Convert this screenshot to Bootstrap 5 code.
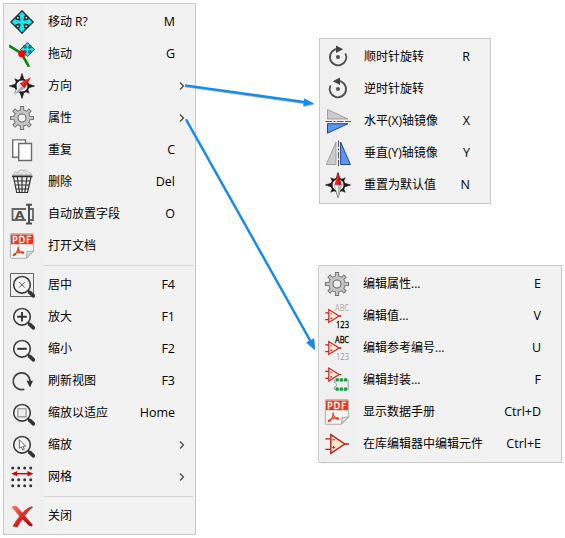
<!DOCTYPE html>
<html lang="zh-CN">
<head>
<meta charset="utf-8">
<meta name="viewport" content="width=device-width, initial-scale=1">
<title>元件菜单</title>
<link href="https://cdn.jsdelivr.net/npm/bootstrap@5.3.0/dist/css/bootstrap.min.css" rel="stylesheet">
<style>
body{width:565px;height:538px;overflow:hidden;background:#fff;color:#000;font:12px/16px "Open Sans","Noto Sans CJK SC",sans-serif}
.stage{padding:3px 0 0 3px}
.popup{border:1px solid #c8c8c8;padding:2px 0;background:linear-gradient(90deg,#f0f0f0 40px,#f2f2f2 40px)}
.popup-main{width:193px}
.popup-orient{width:172px;margin:35px 0 0 123px}
.popup-props{width:244px;margin:61px 0 0 122px}
.entry{height:32px;padding:0 20px 0 5px;white-space:nowrap}
.entry svg{width:26px;height:26px;margin-right:13px;flex:none}
.keys{font-size:12.5px}
.entry .more{width:6px;height:10px;margin-right:-10px}
.rule{height:1px;margin:3px 2px 3px 40px;background:#d2d2d2}
.arrows{left:0;top:0;pointer-events:none}
</style>
<script src="https://cdn.jsdelivr.net/npm/bootstrap@5.3.0/dist/js/bootstrap.bundle.min.js"></script>
</head>
<body class="position-relative">
<svg class="position-absolute" width="0" height="0">
<defs>
<linearGradient id="redfade" x1="0" y1="0" x2="1" y2="1"><stop offset="0" stop-color="#f98074"/><stop offset=".5" stop-color="#d42a22"/><stop offset="1" stop-color="#9a0808"/></linearGradient>
</defs>
</svg>
<svg class="d-none">
<symbol id="move" viewBox="0 0 26 26">
<path d="M13 1.8 18 7 16 7.2 15.2 10.8 18.8 10 19 8 24.2 13 19 18 18.8 16 15.2 15.2 16 18.8 18 19 13 24.2 8 19 10 18.8 10.8 15.2 7.2 16 7 18 1.8 13 7 8 7.2 10 10.8 10.8 10 7.2 8 7Z" fill="#1fe3e6" stroke="#1c3438" stroke-width="1.3" stroke-linejoin="round"/>
<path d="M8 7 7 8M18 7 19 8M7 18 8 19M19 18 18 19" stroke="#1c3438" stroke-width="1.6"/>
<g fill="#a8dfe2" stroke="#1c3438" stroke-width="1.4"><circle cx="8.8" cy="8.8" r="1.7"/><circle cx="17.2" cy="8.8" r="1.7"/><circle cx="8.8" cy="17.2" r="1.7"/><circle cx="17.2" cy="17.2" r="1.7"/></g>
</symbol>
<symbol id="drag" viewBox="0 0 26 26">
<path d="M0 4.7 12.5 12.5 20 25.8" fill="none" stroke="#0a860a" stroke-width="2.6"/>
<use href="#move" x="10.2" y=".2" width="16.5" height="16.5"/>
<circle cx="12.7" cy="12.7" r="3.5" fill="#f00"/>
</symbol>
<symbol id="rose" viewBox="0 0 26 26">
<circle cx="13" cy="13" r="6.5" fill="#f4f4f4" stroke="#1c1c1c" stroke-width="1.7"/>
<path d="M13 .5 15 7H11ZM13 25.5 11 19h4ZM.5 13 7 11v4ZM25.5 13 19 15V11ZM5.8 5.8 9.6 7.6 7.6 9.6ZM20.2 5.8 18.4 9.6 16.4 7.6ZM5.8 20.2 7.6 16.4 9.6 18.4ZM20.2 20.2 16.4 18.4 18.4 16.4Z" fill="#1c1c1c" stroke="#1c1c1c" stroke-width=".7"/>
</symbol>
<symbol id="orient" viewBox="0 0 26 26">
<use href="#rose" width="26" height="26"/>
<path d="M21.8 4.2 10.3 10.5 15.3 15.5Z" fill="#f02c26"/><path d="M21.8 4.2 13 13 15.3 15.5Z" fill="#cf1a18"/>
<path d="M4.8 22.2 10.3 10.5 15.3 15.5Z" fill="#e6e6e6"/><path d="M4.8 22.2 13 13 15.3 15.5Z" fill="#aaa"/>
</symbol>
<symbol id="reset" viewBox="0 0 26 26">
<use href="#rose" width="26" height="26"/>
<path d="M13 .6 9.4 13h7.2Z" fill="#ee2420"/><path d="M13 .6V13h3.6Z" fill="#c81414"/>
<path d="M13 25.4 9.4 13h7.2Z" fill="#eee" stroke="#999" stroke-width=".5"/><path d="M13 25.4V13h3.6Z" fill="#b5b5b5"/>
</symbol>
<symbol id="gear" viewBox="0 0 26 26">
<path d="M13 1V25M1 13H25M4.7 4.7 21.3 21.3M21.3 4.7 4.7 21.3" stroke="#6f6f6f" stroke-width="4.2"/>
<circle cx="13" cy="13" r="8.2" fill="#c4c4c4" stroke="#6f6f6f" stroke-width="1"/>
<path d="M13 2V24M2 13H24M5.4 5.4 20.6 20.6M20.6 5.4 5.4 20.6" stroke="#c4c4c4" stroke-width="2.5"/>
<circle cx="13" cy="13" r="4" fill="#f0f0f0" stroke="#6f6f6f" stroke-width="1.1"/>
</symbol>
<symbol id="copy" viewBox="0 0 26 26"><g fill="#fff" stroke="#6c6c6c" stroke-width="1.4"><path d="M3.7 2.9H16.5V20.3H3.7Z"/><path d="M9.7 6.5H22.5V23.5H9.7Z"/></g></symbol>
<symbol id="trash" viewBox="0 0 26 26">
<path d="M4 5.7 6 3 9 3.4 11 1 15 1.4 16.5.8 18.5 3 21 3.4 22.5 5.7Z" fill="#eee" stroke="#aaa" stroke-width=".8"/><path d="M7 5 10 3.4 12 5 15 2.5 18 5" fill="none" stroke="#bbb" stroke-width=".7"/>
<path d="M3 7.4H23.5" stroke="#333" stroke-width="1.8"/>
<path d="M4.5 8 7.7 23.5H18.5L22 8M8.3 8 10.5 23.5M13 8V23.5M18 8 15.8 23.5M5.3 12H21M6 16H20M7 20H19.3" fill="none" stroke="#333" stroke-width="1.2"/>
</symbol>
<symbol id="field" viewBox="0 0 26 26">
<path d="M17 8H3.5V19H17M21 8H24V19H21" fill="none" stroke="#666" stroke-width="1.8"/>
<path d="M17 3.8H23M17 22.4H23M20 3.5V22.5" stroke="#4e4e4e" stroke-width="2"/>
<text x="6" y="17.5" textLength="9.5" lengthAdjust="spacingAndGlyphs" font-family="DejaVu Sans,sans-serif" font-weight="700" font-size="11" fill="#4a4a4a">A</text>
</symbol>
<symbol id="pdf" viewBox="0 0 26 26">
<path d="M2.3.7H23.7Q24.6.7 24.6 1.6V18L17.5 25.3H2.3Q1.4 25.3 1.4 24.4V1.6Q1.4.7 2.3.7Z" fill="#f4f4f4" stroke="#a8a8a8" stroke-width=".9"/>
<path d="M17.5 25 18 18.5 24.5 18Z" fill="#ddd" stroke="#999" stroke-width=".8"/>
<path d="M2 1.5H24V11.2H2Z" fill="#e8391e"/>
<text x="3.3" y="9.7" textLength="19" lengthAdjust="spacing" font-family="DejaVu Sans,sans-serif" font-size="8.6" fill="#fff" stroke="#fff" stroke-width=".3">PDF</text>
<path d="M4.5 22.6C3.4 21.5 8 18.5 14 18.9M4.5 22.6C7 22.4 9.4 17 9.2 13.5M9.2 13.5C8.6 17 12 20.7 14.5 20.2 15 19.4 14 18.9 13.5 18.9" fill="none" stroke="#e8391e" stroke-width="1.2"/>
</symbol>
<symbol id="lens" viewBox="0 0 26 26">
<circle cx="13" cy="12.8" r="8.3" fill="#f3f3f3" stroke="#3c3c3c" stroke-width="1.6"/>
<path d="M18.7 18.5 21 20.5" stroke="#3c3c3c" stroke-width="1.8"/><path d="M20.8 20.4 24.5 23.8" stroke="#333" stroke-width="3.7" stroke-linecap="round"/>
</symbol>
<symbol id="center" viewBox="0 0 26 26"><path d="M1.5 1.5H24.5V24.5H1.5Z" fill="none" stroke="#666"/><use href="#lens" width="26" height="26"/><path d="M10.3 10.1 15.7 15.5M15.7 10.1 10.3 15.5" stroke="#555" stroke-width="1"/></symbol>
<symbol id="zin" viewBox="0 0 26 26"><use href="#lens" width="26" height="26"/><path d="M8.2 12.8H17.8M13 8V17.6" stroke="#333" stroke-width="1.9"/></symbol>
<symbol id="zout" viewBox="0 0 26 26"><use href="#lens" width="26" height="26"/><path d="M8.2 12.8H17.8" stroke="#333" stroke-width="2"/></symbol>
<symbol id="fit" viewBox="0 0 26 26"><use href="#lens" width="26" height="26"/><path d="M8.9 8.7H17.1V16.9H8.9Z" fill="#eee" stroke="#8c8c8c" stroke-width="1.1"/></symbol>
<symbol id="zsel" viewBox="0 0 26 26"><use href="#lens" width="26" height="26"/><path d="M10.3 7.7V16.3L12.2 14.8 13.8 18 15.3 17.3 14 14.2H16.6Z" fill="#fff" stroke="#555" stroke-width=".9"/></symbol>
<symbol id="refresh" viewBox="0 0 26 26"><path d="M15.3 21.2A8.4 8.4 0 1 1 21 13.4" fill="none" stroke="#404040" stroke-width="1.7"/><path d="M17.5 12.7H24L21 19.4Z" fill="#333"/></symbol>
<symbol id="grid" viewBox="0 0 26 26">
<path d="M3.7 4H22M3.7 15.8H22M3.7 21.8H22" stroke="#333" stroke-width="3" stroke-linecap="round" stroke-dasharray="0 6"/>
<path d="M7 9.7H20" stroke="#d40000" stroke-width="1.5"/><path d="M2.2 9.7 8.2 7.1V12.3ZM24.5 9.7 18.5 7.1V12.3Z" fill="#d40000"/>
</symbol>
<symbol id="close" viewBox="0 0 26 26"><path d="M2.5 4.3Q6 1.7 8.3 3.8L13.4 9.8Q17 5 22.8 3.2L24.2 4.2Q19.5 7.3 16 12.8L23.8 22 22.6 23.5 20 22.7 13.5 16.5Q10.5 20 8.6 24.2L3.5 23.6Q6.3 17.8 10.5 13.2Q7 9 2.5 4.3Z" fill="url(#redfade)"/></symbol>
<symbol id="cw" viewBox="0 0 26 26"><path d="M13 4.9A8.2 8.2 0 1 0 20.4 9.3" fill="none" stroke="#505050" stroke-width="1.8"/><path d="M11 1.4 18.2 5.2 11 9Z" fill="#444"/><circle cx="13" cy="13" r="2" fill="#505050"/></symbol>
<symbol id="ccw" viewBox="0 0 26 26"><use href="#cw" width="26" height="26" transform="matrix(-1 0 0 1 26 0)"/></symbol>
<symbol id="mirx" viewBox="0 0 26 26"><path d="M2.5 1.5V11H23Z" fill="#ccc" stroke="#999" stroke-width=".9"/><path d="M2.5 15.7V25.2L23 15.7Z" fill="#5b96f5" stroke="#123a7c" stroke-width=".9"/><path d="M.5 13.5H7M8.5 13.5H10.5M12 13.5H18.5M20 13.5H26" stroke="#555" stroke-width="1"/></symbol>
<symbol id="miry" viewBox="0 0 26 26"><path d="M11 2V24.5H1.3Z" fill="#ccc" stroke="#999" stroke-width=".9"/><path d="M15.6 2V24.5H25.4Z" fill="#5b96f5" stroke="#123a7c" stroke-width=".9"/><path d="M13.5.5V7M13.5 8.5V10.5M13.5 12V18.5M13.5 20V26" stroke="#555" stroke-width="1"/></symbol>
<symbol id="amp" viewBox="0 0 26 26"><path d="M1.3 7.8H7M1.3 18.3H7M20.7 13H25" stroke="#b21f1f" stroke-width="1.3"/><path d="M6.8 3.6V22.4L20.8 13Z" fill="#fae6cb" stroke="#b21f1f" stroke-width="1.4"/><path d="M8.3 8.8H11M8.3 16.4H11M9.6 15V17.8" stroke="#b21f1f" stroke-width="1"/></symbol>
<symbol id="smallamp" viewBox="0 0 26 26"><path d="M1.3 9.8H5M1.3 16.7H5M15.3 13H17.3" stroke="#b21f1f" stroke-width="1.3"/><path d="M4.8 6.5V19.5L15.2 13Z" fill="#fae6cb" stroke="#bc2828" stroke-width="1.2"/><path d="M6.3 10.8H8M6.3 15.4H8.2M7.2 14.4V16.3" stroke="#b21f1f" stroke-width=".8"/></symbol>
<symbol id="value" viewBox="0 0 26 26"><use href="#smallamp" width="26" height="26"/><g font-family="Open Sans,sans-serif" font-size="9.5"><text x="11" y="8.2" textLength="14" lengthAdjust="spacingAndGlyphs" fill="#aaa">ABC</text><text x="12" y="24.9" textLength="13" lengthAdjust="spacingAndGlyphs" fill="#000" stroke="#000" stroke-width=".3">123</text></g></symbol>
<symbol id="refno" viewBox="0 0 26 26"><use href="#smallamp" width="26" height="26"/><g font-family="Open Sans,sans-serif" font-size="9.5"><text x="11" y="8.2" textLength="14" lengthAdjust="spacingAndGlyphs" fill="#000" stroke="#000" stroke-width=".3">ABC</text><text x="12" y="24.9" textLength="13" lengthAdjust="spacingAndGlyphs" fill="#999">123</text></g></symbol>
<symbol id="foot" viewBox="0 0 26 26"><use href="#smallamp" y="-5.4" width="26" height="26"/><path d="M10.4 13H24.3V22.3H10.4V20A2.1 2.1 0 0 0 10.4 15.6Z" fill="#eee" stroke="#999" stroke-width=".9"/><path d="M11.7 11.2h3v3.4h-3ZM15.9 11.2h3v3.4h-3ZM20.1 11.2h3v3.4h-3ZM11.7 20.4h3v3.4h-3ZM15.9 20.4h3v3.4h-3ZM20.1 20.4h3v3.4h-3Z" fill="#179b3c"/></symbol>
<symbol id="chev" viewBox="0 0 6 10"><path d="M1 1.5 4.5 5 1 8.5" fill="none" stroke="#444" stroke-width="1.2"/></symbol>
</svg>

<div class="stage d-flex align-items-start">
<div class="popup popup-main">
<div class="entry d-flex align-items-center"><svg><use href="#move"/></svg><span>移动 R?</span><span class="keys ms-auto">M</span></div>
<div class="entry d-flex align-items-center"><svg><use href="#drag"/></svg><span>拖动</span><span class="keys ms-auto">G</span></div>
<div class="entry d-flex align-items-center"><svg><use href="#orient"/></svg><span>方向</span><svg class="more ms-auto"><use href="#chev"/></svg></div>
<div class="entry d-flex align-items-center"><svg><use href="#gear"/></svg><span>属性</span><svg class="more ms-auto"><use href="#chev"/></svg></div>
<div class="entry d-flex align-items-center"><svg><use href="#copy"/></svg><span>重复</span><span class="keys ms-auto">C</span></div>
<div class="entry d-flex align-items-center"><svg><use href="#trash"/></svg><span>删除</span><span class="keys ms-auto">Del</span></div>
<div class="entry d-flex align-items-center"><svg><use href="#field"/></svg><span>自动放置字段</span><span class="keys ms-auto">O</span></div>
<div class="entry d-flex align-items-center"><svg><use href="#pdf"/></svg><span>打开文档</span></div>
<div class="rule"></div>
<div class="entry d-flex align-items-center"><svg><use href="#center"/></svg><span>居中</span><span class="keys ms-auto">F4</span></div>
<div class="entry d-flex align-items-center"><svg><use href="#zin"/></svg><span>放大</span><span class="keys ms-auto">F1</span></div>
<div class="entry d-flex align-items-center"><svg><use href="#zout"/></svg><span>缩小</span><span class="keys ms-auto">F2</span></div>
<div class="entry d-flex align-items-center"><svg><use href="#refresh"/></svg><span>刷新视图</span><span class="keys ms-auto">F3</span></div>
<div class="entry d-flex align-items-center"><svg><use href="#fit"/></svg><span>缩放以适应</span><span class="keys ms-auto">Home</span></div>
<div class="entry d-flex align-items-center"><svg><use href="#zsel"/></svg><span>缩放</span><svg class="more ms-auto"><use href="#chev"/></svg></div>
<div class="entry d-flex align-items-center"><svg><use href="#grid"/></svg><span>网格</span><svg class="more ms-auto"><use href="#chev"/></svg></div>
<div class="rule"></div>
<div class="entry d-flex align-items-center"><svg><use href="#close"/></svg><span>关闭</span></div>
</div>

<div class="d-flex flex-column">
<div class="popup popup-orient">
<div class="entry d-flex align-items-center"><svg><use href="#cw"/></svg><span>顺时针旋转</span><span class="keys ms-auto">R</span></div>
<div class="entry d-flex align-items-center"><svg><use href="#ccw"/></svg><span>逆时针旋转</span></div>
<div class="entry d-flex align-items-center"><svg><use href="#mirx"/></svg><span>水平(X)轴镜像</span><span class="keys ms-auto">X</span></div>
<div class="entry d-flex align-items-center"><svg><use href="#miry"/></svg><span>垂直(Y)轴镜像</span><span class="keys ms-auto">Y</span></div>
<div class="entry d-flex align-items-center"><svg><use href="#reset"/></svg><span>重置为默认值</span><span class="keys ms-auto">N</span></div>
</div>
<div class="popup popup-props">
<div class="entry d-flex align-items-center"><svg><use href="#gear"/></svg><span>编辑属性...</span><span class="keys ms-auto">E</span></div>
<div class="entry d-flex align-items-center"><svg><use href="#value"/></svg><span>编辑值...</span><span class="keys ms-auto">V</span></div>
<div class="entry d-flex align-items-center"><svg><use href="#refno"/></svg><span>编辑参考编号...</span><span class="keys ms-auto">U</span></div>
<div class="entry d-flex align-items-center"><svg><use href="#foot"/></svg><span>编辑封装...</span><span class="keys ms-auto">F</span></div>
<div class="entry d-flex align-items-center"><svg><use href="#pdf"/></svg><span>显示数据手册</span><span class="keys ms-auto">Ctrl+D</span></div>
<div class="entry d-flex align-items-center"><svg><use href="#amp"/></svg><span>在库编辑器中编辑元件</span><span class="keys ms-auto">Ctrl+E</span></div>
</div>
</div>
</div>

<svg class="arrows position-absolute" width="565" height="538">
<g transform="translate(.3 .9)" stroke="#777" stroke-opacity=".6" fill="#777" fill-opacity=".6"><path d="M185 85.3 304 102M186 119.3 310.5 341" stroke-width="2.2"/><path d="M314.3 103.7 303.2 106 304.3 98.3ZM315 350 306.2 342.3 314 338.3Z" stroke="none"/></g>
<path d="M185 85.3 304 102M186 119.3 310.5 341" stroke="#118df0" stroke-width="2.3"/>
<path d="M314.3 103.7 303.2 106 304.3 98.3ZM315 350 306.2 342.3 314 338.3Z" fill="#118df0"/>
</svg>
</body>
</html>
